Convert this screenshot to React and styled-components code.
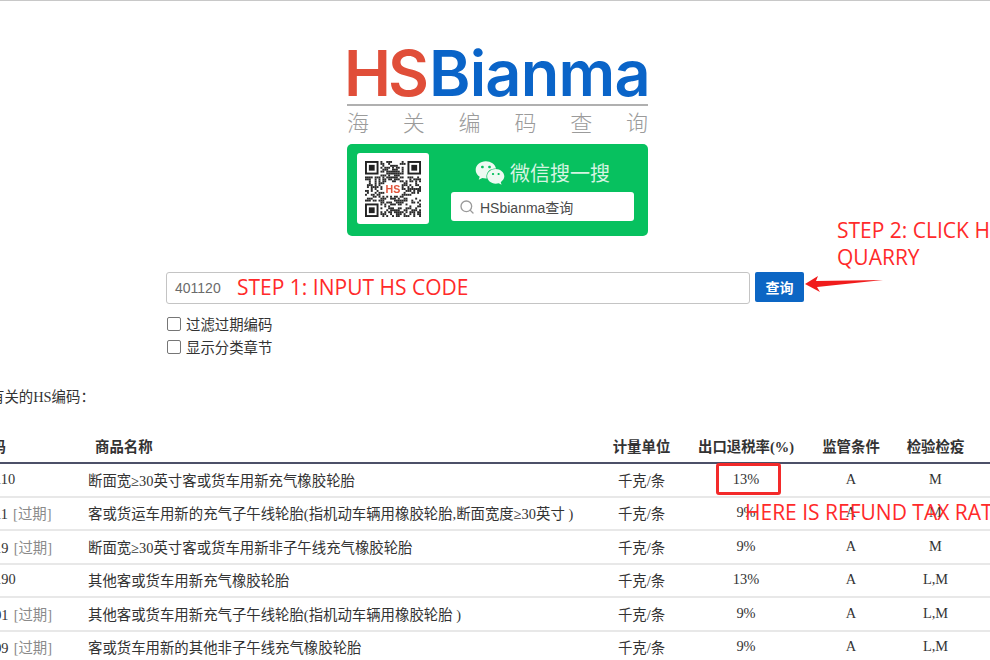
import React from 'react';
import styled, { createGlobalStyle } from 'styled-components';
import { FaWeixin } from 'react-icons/fa';
import { Search } from 'lucide-react';

const cjkSans = '"Noto Sans CJK SC", sans-serif';
const annotationFont = '"Open Sans", "Noto Sans CJK SC", sans-serif';

const GlobalStyle = createGlobalStyle`
  html, body {
    margin: 0;
    padding: 0;
    background: #fff;
    overflow: hidden;
  }
`;

const Page = styled.div`
  position: relative;
  width: 990px;
  height: 660px;
  overflow: hidden;
  box-sizing: border-box;
  border-top: 1px solid #c8c8c8;
`;

const Brand = styled.div`
  width: 301px;
  margin: 42px 0 0 347px;
`;

const Logo = styled.div`
  display: flex;
  height: 61px;
  font-family: Inter, sans-serif;
  font-weight: 600;
  font-size: 63px;
  line-height: 61px;
  filter: blur(0.3px);
`;

const LogoPart = styled.span`
  color: ${p => p.$color};
  letter-spacing: ${p => p.$spacing}px;
  margin-left: ${p => p.$offset || 0}px;
`;

const Tagline = styled.div`
  display: flex;
  justify-content: space-between;
  border-top: 2px solid #b0b0b0;
  padding-top: 2px;
  height: 34px;
  box-sizing: border-box;
  font-family: ${cjkSans};
  font-weight: 300;
  font-size: 22px;
  line-height: 26px;
  color: #9b9b9b;
`;

const GreenCard = styled.div`
  display: flex;
  height: 92px;
  margin-top: 6px;
  padding: 9px 14px 12px 10px;
  box-sizing: border-box;
  background: #07c15f;
  border-radius: 5px;
`;

const QrBox = styled.div`
  display: flex;
  align-items: center;
  justify-content: center;
  width: 72px;
  height: 71px;
  background: #fff;
  border-radius: 3px;
`;

const CardRight = styled.div`
  display: flex;
  flex-direction: column;
  width: 183px;
  margin-left: 22px;
`;

const CardTitle = styled.div`
  display: flex;
  align-items: center;
  justify-content: center;
  gap: 5px;
  height: 39px;
  color: #d5f4e1;
  font-family: ${cjkSans};
  font-size: 20px;
  font-weight: 400;
`;

const SearchBox = styled.div`
  display: flex;
  align-items: center;
  gap: 5px;
  height: 29px;
  padding-left: 8px;
  background: #fff;
  border-radius: 3px;
  color: #4a4a4a;
  font-family: "Liberation Sans", ${cjkSans};
  font-size: 14px;
`;

const SearchForm = styled.div`
  display: flex;
  gap: 5px;
  margin: 36px 0 0 166px;
`;

const InputBox = styled.div`
  display: flex;
  align-items: center;
  box-sizing: border-box;
  width: 584px;
  height: 32px;
  padding-left: 8px;
  border: 1px solid #c4c4c4;
  border-radius: 3px;
  font-family: "Liberation Sans", sans-serif;
  font-size: 14px;
  color: #6b6b6b;
`;

const SubmitButton = styled.button`
  width: 49px;
  height: 30px;
  padding: 0;
  border: none;
  border-radius: 2px;
  background: #0c66c4;
  color: #fff;
  font-family: ${cjkSans};
  font-size: 14px;
  font-weight: 700;
`;

const Options = styled.div`
  display: flex;
  flex-direction: column;
  gap: 6px;
  margin: 11px 0 0 167px;
`;

const OptionRow = styled.label`
  display: flex;
  align-items: center;
  gap: 5px;
  height: 17px;
  font-family: ${cjkSans};
  font-size: 14.4px;
  color: #333;
`;

const CheckBox = styled.span`
  display: block;
  box-sizing: border-box;
  width: 14px;
  height: 14px;
  border: 1px solid #767676;
  border-radius: 2px;
  background: #fff;
`;

const Caption = styled.div`
  margin: 32px 0 0 -67px;
  height: 20px;
  font-family: "Liberation Serif", ${cjkSans};
  font-size: 14.4px;
  line-height: 20px;
  color: #333;
  white-space: nowrap;
`;

const Table = styled.table`
  table-layout: fixed;
  width: 1100px;
  margin: 25px 0 0 -55px;
  border-collapse: collapse;
  font-family: "Liberation Serif", ${cjkSans};
  font-size: 14.4px;
  color: #333;
`;

const HeadCell = styled.th`
  height: 31px;
  padding: 0 0 4px ${p => p.$inset || 0}px;
  box-sizing: border-box;
  border-bottom: 2px solid #4c5068;
  font-weight: 700;
  text-align: ${p => p.$left ? 'left' : 'center'};
  white-space: nowrap;
`;

const Cell = styled.td`
  height: 33.5px;
  padding: 0 0 1px ${p => p.$pad || 0}px;
  box-sizing: border-box;
  border-bottom: 2px solid #e8e8e8;
  text-align: ${p => p.$pad ? 'left' : 'center'};
  white-space: nowrap;
`;

const Expired = styled.span`
  margin-left: 1.5px;
  color: #8a8a8a;
`;

const Annotation = styled.div`
  position: absolute;
  left: ${p => p.$x}px;
  top: ${p => p.$y}px;
  color: #ff2a2a;
  font-family: ${annotationFont};
  font-size: 21px;
  line-height: 27px;
  white-space: nowrap;
`;

const RateBox = styled.div`
  position: absolute;
  left: 716px;
  top: 462px;
  width: 65px;
  height: 32px;
  box-sizing: border-box;
  border: 3px solid #f32a2a;
  border-radius: 3px;
`;

const ArrowMark = styled.svg`
  position: absolute;
  left: 800px;
  top: 270px;
`;

const rows = [
  { code: '401120110', name: '断面宽≥30英寸客或货车用新充气橡胶轮胎', rate: '13%', check: 'M' },
  { code: '40112011', expired: true, name: '客或货运车用新的充气子午线轮胎(指机动车辆用橡胶轮胎,断面宽度≥30英寸 )', rate: '9%', check: 'M' },
  { code: '40112019', expired: true, name: '断面宽≥30英寸客或货车用新非子午线充气橡胶轮胎', rate: '9%', check: 'M' },
  { code: '401120190', name: '其他客或货车用新充气橡胶轮胎', rate: '13%', check: 'L,M' },
  { code: '40112091', expired: true, name: '其他客或货车用新充气子午线轮胎(指机动车辆用橡胶轮胎 )', rate: '9%', check: 'L,M' },
  { code: '40112099', expired: true, name: '客或货车用新的其他非子午线充气橡胶轮胎', rate: '9%', check: 'L,M' },
];

// simple repeatable noise for the qr modules
const qrCells = () => {
  const size = 29;
  const cells = [];
  let seed = 7;
  const inFinder = (x, y) =>
    (x < 8 && y < 8) || (x > size - 9 && y < 8) || (x < 8 && y > size - 9);
  const inCentre = (x, y) => x > 9 && x < 19 && y > 10 && y < 18;
  for (let y = 0; y < size; y++) {
    for (let x = 0; x < size; x++) {
      seed = (seed * 1103515245 + 12345) & 0x7fffffff;
      if (!inFinder(x, y) && !inCentre(x, y) && (seed >> 16) % 100 < 52) {
        cells.push([x, y]);
      }
    }
  }
  return cells;
};

const Finder = ({ x, y }) => (
  <g>
    <rect x={x + 0.5} y={y + 0.5} width="6" height="6" fill="none" stroke="#222" />
    <rect x={x + 2} y={y + 2} width="3" height="3" fill="#222" />
  </g>
);

const QrCode = () => (
  <svg width="56" height="56" viewBox="0 0 29 29" style={{ filter: 'blur(0.3px)' }}>
    {qrCells().map(([x, y]) => (
      <rect key={`${x}-${y}`} x={x} y={y} width="1" height="1" fill="#2a2a2a" />
    ))}
    <Finder x={0} y={0} />
    <Finder x={22} y={0} />
    <Finder x={0} y={22} />
    <text x="14.5" y="16.5" textAnchor="middle" fontSize="5.5" fontWeight="700" fontFamily="Liberation Sans, sans-serif" fill="#e2563c">HS</text>
  </svg>
);

const App = () => {
  return (
    <Page>
      <GlobalStyle />
      <Brand>
        <Logo>
          <LogoPart $color="#e04e39" $spacing={-3} $offset={-3}>HS</LogoPart>
          <LogoPart $color="#0a64c8" $spacing={-0.8} $offset={3}>Bianma</LogoPart>
        </Logo>
        <Tagline>
          <span>海</span><span>关</span><span>编</span><span>码</span><span>查</span><span>询</span>
        </Tagline>
        <GreenCard>
          <QrBox><QrCode /></QrBox>
          <CardRight>
            <CardTitle>
              <FaWeixin size={30} color="#eefaf2" />
              微信搜一搜
            </CardTitle>
            <SearchBox>
              <Search size={16} color="#9a9a9a" />
              HSbianma查询
            </SearchBox>
          </CardRight>
        </GreenCard>
      </Brand>

      <SearchForm>
        <InputBox>401120</InputBox>
        <SubmitButton>查询</SubmitButton>
      </SearchForm>

      <Options>
        <OptionRow><CheckBox />过滤过期编码</OptionRow>
        <OptionRow><CheckBox />显示分类章节</OptionRow>
      </Options>

      <Caption>与401120有关的HS编码：</Caption>

      <Table>
        <colgroup>
          <col style={{ width: 135 }} />
          <col style={{ width: 513 }} />
          <col style={{ width: 97 }} />
          <col style={{ width: 112 }} />
          <col style={{ width: 98 }} />
          <col style={{ width: 71 }} />
          <col />
        </colgroup>
        <thead>
          <tr>
            <HeadCell $left $inset={13}>HS编码</HeadCell>
            <HeadCell $left $inset={15}>商品名称</HeadCell>
            <HeadCell>计量单位</HeadCell>
            <HeadCell>出口退税率(%)</HeadCell>
            <HeadCell>监管条件</HeadCell>
            <HeadCell>检验检疫</HeadCell>
            <HeadCell />
          </tr>
        </thead>
        <tbody>
          {rows.map(row => (
            <tr key={row.code}>
              <Cell $pad={6.5}>
                {row.code}
                {row.expired && <Expired> [过期]</Expired>}
              </Cell>
              <Cell $pad={8}>{row.name}</Cell>
              <Cell>千克/条</Cell>
              <Cell>{row.rate}</Cell>
              <Cell>A</Cell>
              <Cell>{row.check}</Cell>
              <Cell />
            </tr>
          ))}
        </tbody>
      </Table>

      <Annotation $x={237} $y={273}>STEP 1: INPUT HS CODE</Annotation>
      <Annotation $x={837} $y={216}>STEP 2: CLICK H</Annotation>
      <Annotation $x={837} $y={243}>QUARRY</Annotation>
      <Annotation $x={745} $y={498}>HERE IS REFUND TAX RAT</Annotation>
      <RateBox />
      <ArrowMark width="90" height="26" viewBox="0 0 90 26">
        <polygon points="5,13 18,5 16,10 83,9 17,16 20,21" fill="#f01c1c" />
      </ArrowMark>
    </Page>
  );
};

export default App;
